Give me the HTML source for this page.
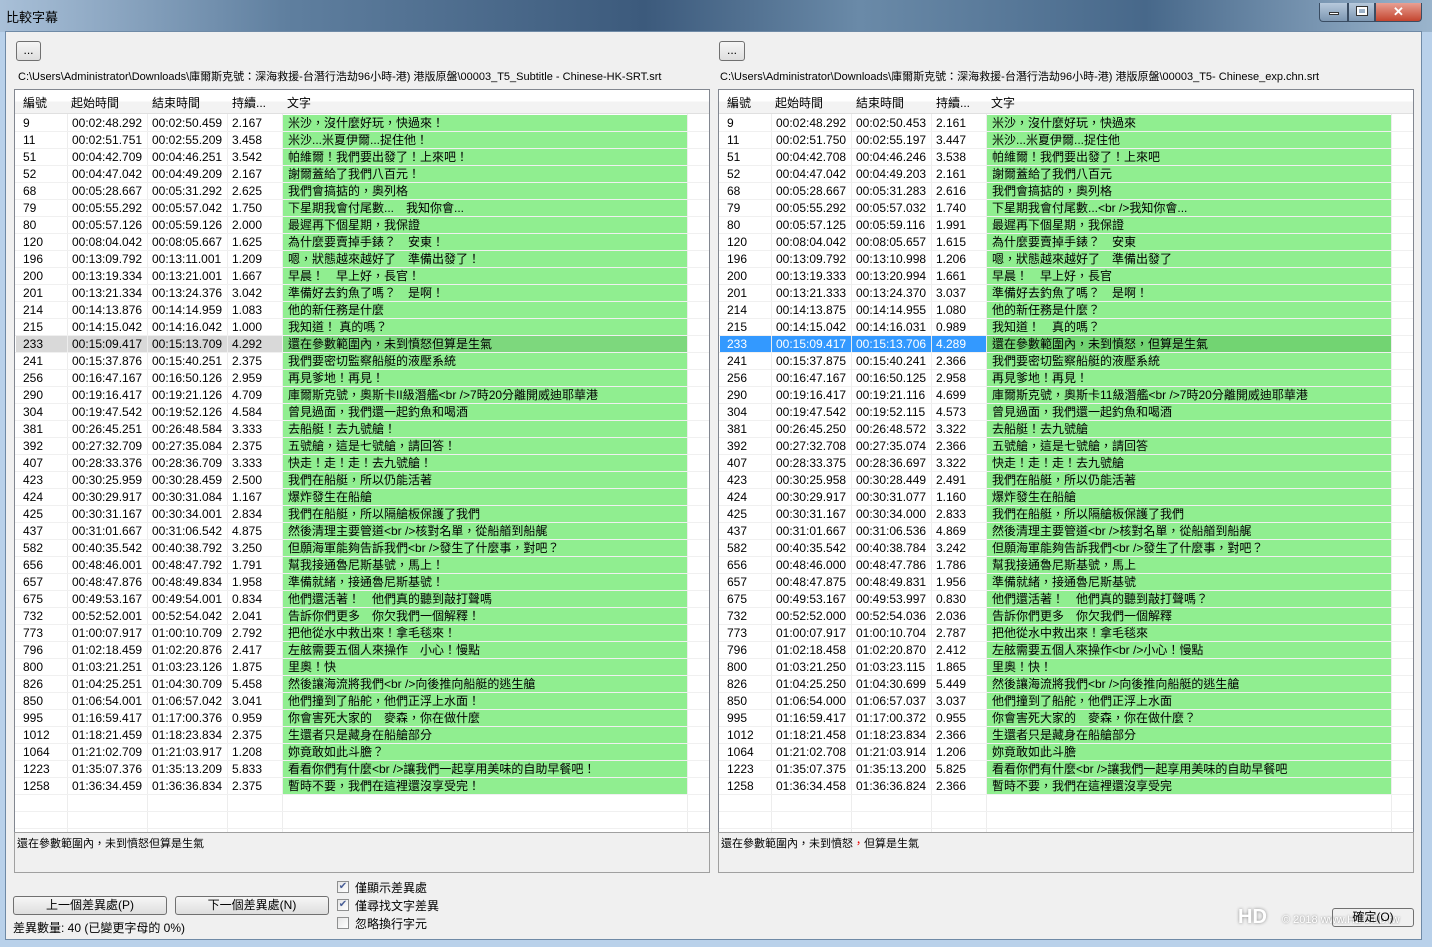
<!DOCTYPE html>
<html><head><meta charset="utf-8">
<style>
*{box-sizing:border-box;margin:0;padding:0}
body{width:1432px;height:947px;overflow:hidden;background:#b9d1ea;font-family:"Liberation Sans","Noto Sans CJK TC",sans-serif;font-size:12px;color:#000;position:relative}
.title{position:absolute;left:0;top:0;width:1432px;height:32px;background:linear-gradient(90deg,#a9c0d8 0%,#5f7f9f 20%,#3c5a7c 45%,#6a8aa8 60%,#47688a 80%,#9ab4cc 100%)}
.title span{position:absolute;left:6px;top:7px;font-size:13px;color:#000}
.client{position:absolute;left:5px;top:31px;width:1417px;height:909px;background:#f0f0f0;border:1px solid #6f8aa6}
.btn{position:absolute;background:linear-gradient(#f6f6f6,#dedede);border:1px solid #707070;border-radius:3px;text-align:center;font-size:12px;line-height:17px}
.path{position:absolute;font-size:11px;white-space:nowrap;color:#000}
.list{position:absolute;top:89px;width:696px;height:744px;background:#fff;border:1px solid #828790;overflow:hidden}
.hdr{position:absolute;left:0;top:0;height:24px;width:100%;background:linear-gradient(#fff 50%,#f3f3f3 50%);border-bottom:1px solid #e0e0e0}
.hdr div{position:absolute;top:4px;font-size:12px}
.vl{position:absolute;top:0;width:1px;height:744px;background:#ededed}
.row{position:absolute;left:0;height:17px;width:100%;border-bottom:1px solid #f0f0f0}
.row div{position:absolute;top:0;height:16px;line-height:16px;white-space:nowrap;overflow:hidden}
.tb{position:absolute;top:832px;width:696px;height:41px;background:#f0f0f0;border:1px solid #a0a0a0;font-size:11px;padding:2px 2px}
.cb{position:absolute;left:337px;width:12px;height:12px;border:1px solid #8e8f8f;background:linear-gradient(135deg,#e6e6e6,#fff);font-size:10px;line-height:10px;text-align:center;color:#4a5f97}
.cbl{position:absolute;left:355px;font-size:12px}
.ctrl{position:absolute;top:3px;height:19px;border:1px solid #3a4d63;border-top:none}
</style></head><body>
<div class="title"><span>比較字幕</span>
<div class="ctrl" style="left:1319px;width:29px;background:linear-gradient(#b7c9dc,#7d97b2);border-radius:0 0 0 4px"><div style="position:absolute;left:9px;top:9px;width:10px;height:3px;background:#fff;border:1px solid #333"></div></div>
<div class="ctrl" style="left:1348px;width:27px;background:linear-gradient(#b7c9dc,#7d97b2)"><div style="position:absolute;left:8px;top:4px;width:10px;height:8px;border:2px solid #fff;outline:1px solid #333"></div></div>
<div class="ctrl" style="left:1375px;width:47px;background:linear-gradient(#e8a093,#c4452f);border-radius:0 0 4px 0;color:#fff;font-weight:bold;text-align:center;font-size:13px;line-height:17px">✕</div>
</div>
<div class="client"></div>
<div class="btn" style="left:16px;top:41px;width:25px;height:20px">...</div>
<div class="btn" style="left:719px;top:41px;width:26px;height:20px">...</div>
<div class="path" style="left:18px;top:68px">C:\Users\Administrator\Downloads\庫爾斯克號：深海救援-台潛行浩劫96小時-港) 港版原盤\00003_T5_Subtitle - Chinese-HK-SRT.srt</div>
<div class="path" style="left:720px;top:68px">C:\Users\Administrator\Downloads\庫爾斯克號：深海救援-台潛行浩劫96小時-港) 港版原盤\00003_T5- Chinese_exp.chn.srt</div>
<div class="list" id="L" style="left:14px"></div>
<div class="list" id="R" style="left:718px"></div>
<div class="tb" style="left:14px">還在參數範圍內，未到憤怒但算是生氣</div>
<div class="tb" style="left:718px">還在參數範圍內，未到憤怒<span style="color:#e00">，</span>但算是生氣</div>
<div class="btn" style="left:13px;top:896px;width:154px;height:19px">上一個差異處(P)</div>
<div class="btn" style="left:175px;top:896px;width:154px;height:19px">下一個差異處(N)</div>
<div class="cb" style="top:881px">✔</div><div class="cbl" style="top:879px">僅顯示差異處</div>
<div class="cb" style="top:899px">✔</div><div class="cbl" style="top:897px">僅尋找文字差異</div>
<div class="cb" style="top:917px"></div><div class="cbl" style="top:915px">忽略換行字元</div>
<div style="position:absolute;left:13px;top:919px;font-size:12px">差異數量: 40 (已變更字母的 0%)</div>
<div style="position:absolute;left:1238px;top:906px;font-size:20px;font-weight:bold;color:#fff;text-shadow:0 0 3px #888">HD</div>
<div style="position:absolute;left:1282px;top:914px;font-size:11px;color:#fff;text-shadow:0 0 2px #777;white-space:nowrap">© 2018 www.HDClub.tw</div>
<div class="btn" style="left:1332px;top:908px;width:82px;height:19px;background:transparent">確定(O)</div>
<script>
var L=`9|00:02:48.292|00:02:50.459|2.167|米沙，沒什麼好玩，快過來！
11|00:02:51.751|00:02:55.209|3.458|米沙...米夏伊爾...捉住他！
51|00:04:42.709|00:04:46.251|3.542|帕維爾！我們要出發了！上來吧！
52|00:04:47.042|00:04:49.209|2.167|謝爾蓋給了我們八百元！
68|00:05:28.667|00:05:31.292|2.625|我們會搞掂的，奧列格
79|00:05:55.292|00:05:57.042|1.750|下星期我會付尾數...　我知你會...
80|00:05:57.126|00:05:59.126|2.000|最遲再下個星期，我保證
120|00:08:04.042|00:08:05.667|1.625|為什麼要賣掉手錶？　安東！
196|00:13:09.792|00:13:11.001|1.209|嗯，狀態越來越好了　準備出發了！
200|00:13:19.334|00:13:21.001|1.667|早晨！　早上好，長官！
201|00:13:21.334|00:13:24.376|3.042|準備好去釣魚了嗎？　是啊！
214|00:14:13.876|00:14:14.959|1.083|他的新任務是什麼
215|00:14:15.042|00:14:16.042|1.000|我知道！ 真的嗎？
233|00:15:09.417|00:15:13.709|4.292|還在參數範圍內，未到憤怒但算是生氣
241|00:15:37.876|00:15:40.251|2.375|我們要密切監察船艇的液壓系統
256|00:16:47.167|00:16:50.126|2.959|再見爹地！再見！
290|00:19:16.417|00:19:21.126|4.709|庫爾斯克號，奧斯卡II級潛艦<br />7時20分離開威迪耶華港
304|00:19:47.542|00:19:52.126|4.584|曾見過面，我們還一起釣魚和喝酒
381|00:26:45.251|00:26:48.584|3.333|去船艇！去九號艙！
392|00:27:32.709|00:27:35.084|2.375|五號艙，這是七號艙，請回答！
407|00:28:33.376|00:28:36.709|3.333|快走！走！走！去九號艙！
423|00:30:25.959|00:30:28.459|2.500|我們在船艇，所以仍能活著
424|00:30:29.917|00:30:31.084|1.167|爆炸發生在船艙
425|00:30:31.167|00:30:34.001|2.834|我們在船艇，所以隔艙板保護了我們
437|00:31:01.667|00:31:06.542|4.875|然後清理主要管道<br />核對名單，從船艏到船艉
582|00:40:35.542|00:40:38.792|3.250|但願海軍能夠告訴我們<br />發生了什麼事，對吧？
656|00:48:46.001|00:48:47.792|1.791|幫我接通魯尼斯基號，馬上！
657|00:48:47.876|00:48:49.834|1.958|準備就緒，接通魯尼斯基號！
675|00:49:53.167|00:49:54.001|0.834|他們還活著！　他們真的聽到敲打聲嗎
732|00:52:52.001|00:52:54.042|2.041|告訴你們更多　你欠我們一個解釋！
773|01:00:07.917|01:00:10.709|2.792|把他從水中救出來！拿毛毯來！
796|01:02:18.459|01:02:20.876|2.417|左舷需要五個人來操作　小心！慢點
800|01:03:21.251|01:03:23.126|1.875|里奧！快
826|01:04:25.251|01:04:30.709|5.458|然後讓海流將我們<br />向後推向船艇的逃生艙
850|01:06:54.001|01:06:57.042|3.041|他們撞到了船舵，他們正浮上水面！
995|01:16:59.417|01:17:00.376|0.959|你會害死大家的　麥森，你在做什麼
1012|01:18:21.459|01:18:23.834|2.375|生還者只是藏身在船艙部分
1064|01:21:02.709|01:21:03.917|1.208|妳竟敢如此斗膽？
1223|01:35:07.376|01:35:13.209|5.833|看看你們有什麼<br />讓我們一起享用美味的自助早餐吧！
1258|01:36:34.459|01:36:36.834|2.375|暫時不要，我們在這裡還沒享受完！`;
var R=`9|00:02:48.292|00:02:50.453|2.161|米沙，沒什麼好玩，快過來
11|00:02:51.750|00:02:55.197|3.447|米沙...米夏伊爾...捉住他
51|00:04:42.708|00:04:46.246|3.538|帕維爾！我們要出發了！上來吧
52|00:04:47.042|00:04:49.203|2.161|謝爾蓋給了我們八百元
68|00:05:28.667|00:05:31.283|2.616|我們會搞掂的，奧列格
79|00:05:55.292|00:05:57.032|1.740|下星期我會付尾數...<br />我知你會...
80|00:05:57.125|00:05:59.116|1.991|最遲再下個星期，我保證
120|00:08:04.042|00:08:05.657|1.615|為什麼要賣掉手錶？　安東
196|00:13:09.792|00:13:10.998|1.206|嗯，狀態越來越好了　準備出發了
200|00:13:19.333|00:13:20.994|1.661|早晨！　早上好，長官
201|00:13:21.333|00:13:24.370|3.037|準備好去釣魚了嗎？　是啊！
214|00:14:13.875|00:14:14.955|1.080|他的新任務是什麼？
215|00:14:15.042|00:14:16.031|0.989|我知道！　真的嗎？
233|00:15:09.417|00:15:13.706|4.289|還在參數範圍內，未到憤怒，但算是生氣
241|00:15:37.875|00:15:40.241|2.366|我們要密切監察船艇的液壓系統
256|00:16:47.167|00:16:50.125|2.958|再見爹地！再見！
290|00:19:16.417|00:19:21.116|4.699|庫爾斯克號，奧斯卡11級潛艦<br />7時20分離開威迪耶華港
304|00:19:47.542|00:19:52.115|4.573|曾見過面，我們還一起釣魚和喝酒
381|00:26:45.250|00:26:48.572|3.322|去船艇！去九號艙
392|00:27:32.708|00:27:35.074|2.366|五號艙，這是七號艙，請回答
407|00:28:33.375|00:28:36.697|3.322|快走！走！走！去九號艙
423|00:30:25.958|00:30:28.449|2.491|我們在船艇，所以仍能活著
424|00:30:29.917|00:30:31.077|1.160|爆炸發生在船艙
425|00:30:31.167|00:30:34.000|2.833|我們在船艇，所以隔艙板保護了我們
437|00:31:01.667|00:31:06.536|4.869|然後清理主要管道<br />核對名單，從船艏到船艉
582|00:40:35.542|00:40:38.784|3.242|但願海軍能夠告訴我們<br />發生了什麼事，對吧？
656|00:48:46.000|00:48:47.786|1.786|幫我接通魯尼斯基號，馬上
657|00:48:47.875|00:48:49.831|1.956|準備就緒，接通魯尼斯基號
675|00:49:53.167|00:49:53.997|0.830|他們還活著！　他們真的聽到敲打聲嗎？
732|00:52:52.000|00:52:54.036|2.036|告訴你們更多　你欠我們一個解釋
773|01:00:07.917|01:00:10.704|2.787|把他從水中救出來！拿毛毯來
796|01:02:18.458|01:02:20.870|2.412|左舷需要五個人來操作<br />小心！慢點
800|01:03:21.250|01:03:23.115|1.865|里奧！快！
826|01:04:25.250|01:04:30.699|5.449|然後讓海流將我們<br />向後推向船艇的逃生艙
850|01:06:54.000|01:06:57.037|3.037|他們撞到了船舵，他們正浮上水面
995|01:16:59.417|01:17:00.372|0.955|你會害死大家的　麥森，你在做什麼？
1012|01:18:21.458|01:18:23.834|2.366|生還者只是藏身在船艙部分
1064|01:21:02.708|01:21:03.914|1.206|妳竟敢如此斗膽
1223|01:35:07.375|01:35:13.200|5.825|看看你們有什麼<br />讓我們一起享用美味的自助早餐吧
1258|01:36:34.458|01:36:36.824|2.366|暫時不要，我們在這裡還沒享受完`;
function esc(s){return s.replace(/&/g,'&amp;').replace(/</g,'&lt;').replace(/>/g,'&gt;')}
function build(id,data,focus){
 var el=document.getElementById(id),h='';
 var cols=[[0,52],[52,132],[132,212],[212,267],[267,672]];
 [52,132,212,267,672].forEach(function(x){h+='<div class="vl" style="left:'+x+'px"></div>'});
 h+='<div class="hdr"><div style="left:8px">編號</div><div style="left:56px">起始時間</div><div style="left:137px">結束時間</div><div style="left:217px">持續...</div><div style="left:272px">文字</div></div>';
 var rows=data.split('\n');
 for(var i=0;i<43;i++){
  var top=25+i*17;
  if(i>=rows.length){h+='<div class="row" style="top:'+top+'px"></div>';continue;}
  var f=rows[i].split('|'),sel=f[0]=='233';
  h+='<div class="row" style="top:'+top+'px">';
  for(var c=0;c<5;c++){
   var bg='',col='#000';
   if(c==4)bg=sel?(focus?'#72d472':'#7dd87d'):'#90ee90';
   else if(sel){bg=focus?'#3399ff':'#d9d9d9';col=focus?'#fff':'#000';}
   h+='<div style="left:'+(cols[c][0]+1)+'px;width:'+(cols[c][1]-cols[c][0]-1)+'px;background:'+(bg||'transparent')+';color:'+col+';padding-left:'+(c==4?5:(c==0?7:4))+'px">'+esc(f[c])+'</div>';
  }
  h+='</div>';
 }
 el.innerHTML=h;
}
build('L',L,false);build('R',R,true);
</script>
</body></html>
